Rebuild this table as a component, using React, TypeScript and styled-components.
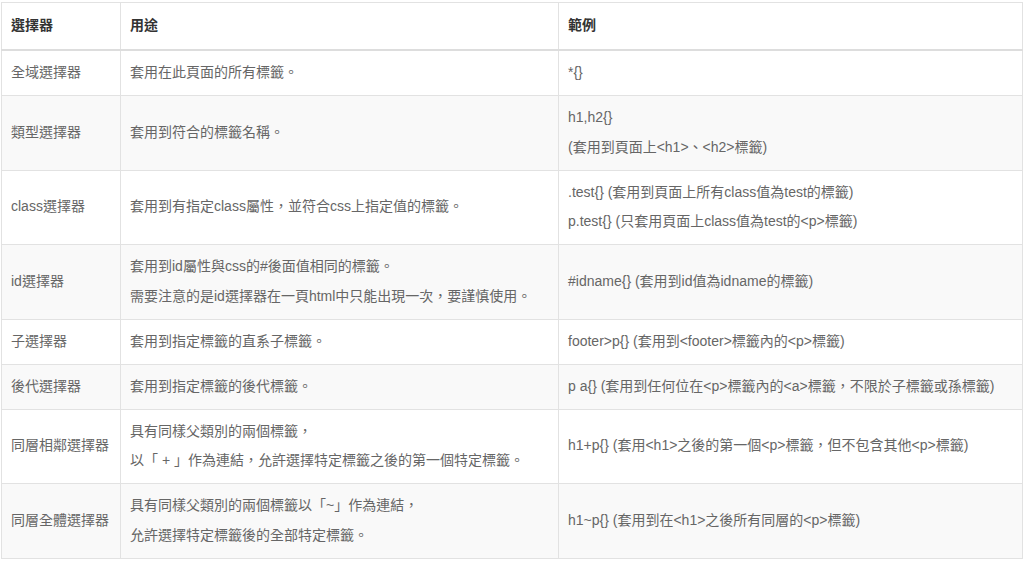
import React from "react";
import styled, { createGlobalStyle } from "styled-components";

const GlobalStyle = createGlobalStyle`
  html, body {
    margin: 0;
    padding: 0;
    background: #ffffff;
  }
  body {
    font-family: "Liberation Sans", Arial, "Noto Sans CJK TC", sans-serif;
  }
`;

const Page = styled.div`
  padding: 2px 1px 0 1px;
  width: 1022px;
`;

const Table = styled.table`
  width: 1022px;
  table-layout: fixed;
  border-collapse: collapse;
  border: 1px solid #dddddd;
  font-size: 14px;
  color: #666666;
`;

const HeadCell = styled.th`
  text-align: left;
  font-weight: bold;
  color: #333333;
  line-height: 29.5px;
  padding: 8px 9px 8.5px 9px;
  border: 1px solid #e2e2e2;
  border-bottom: 2px solid #dddddd;
  background: #ffffff;
`;

const Row = styled.tr<{ $striped: boolean }>`
  background: ${(p) => (p.$striped ? "#f9f9f9" : "#ffffff")};
`;

const Cell = styled.td`
  line-height: 29.5px;
  padding: 7px 9px 7.5px 9px;
  border: 1px solid #e2e2e2;
  vertical-align: middle;
  white-space: nowrap;
`;

const Line = styled.span`
  display: block;
`;

type RowData = { name: string; usage: string[]; example: string[] };

const rows: RowData[] = [
  { name: "全域選擇器", usage: ["套用在此頁面的所有標籤。"], example: ["*{}"] },
  {
    name: "類型選擇器",
    usage: ["套用到符合的標籤名稱。"],
    example: ["h1,h2{}", "(套用到頁面上<h1>、<h2>標籤)"],
  },
  {
    name: "class選擇器",
    usage: ["套用到有指定class屬性，並符合css上指定值的標籤。"],
    example: [".test{} (套用到頁面上所有class值為test的標籤)", "p.test{} (只套用頁面上class值為test的<p>標籤)"],
  },
  {
    name: "id選擇器",
    usage: ["套用到id屬性與css的#後面值相同的標籤。", "需要注意的是id選擇器在一頁html中只能出現一次，要謹慎使用。"],
    example: ["#idname{} (套用到id值為idname的標籤)"],
  },
  {
    name: "子選擇器",
    usage: ["套用到指定標籤的直系子標籤。"],
    example: ["footer>p{} (套用到<footer>標籤內的<p>標籤)"],
  },
  {
    name: "後代選擇器",
    usage: ["套用到指定標籤的後代標籤。"],
    example: ["p a{} (套用到任何位在<p>標籤內的<a>標籤，不限於子標籤或孫標籤)"],
  },
  {
    name: "同層相鄰選擇器",
    usage: ["具有同樣父類別的兩個標籤，", "以「 + 」作為連結，允許選擇特定標籤之後的第一個特定標籤。"],
    example: ["h1+p{} (套用<h1>之後的第一個<p>標籤，但不包含其他<p>標籤)"],
  },
  {
    name: "同層全體選擇器",
    usage: ["具有同樣父類別的兩個標籤以「~」作為連結，", "允許選擇特定標籤後的全部特定標籤。"],
    example: ["h1~p{} (套用到在<h1>之後所有同層的<p>標籤)"],
  },
];

const Lines = ({ items }: { items: string[] }) => (
  <>
    {items.map((t, i) => (
      <Line key={i}>{t}</Line>
    ))}
  </>
);

export default function App() {
  return (
    <Page>
      <GlobalStyle />
      <Table>
        <colgroup>
          <col style={{ width: 119 }} />
          <col style={{ width: 438 }} />
          <col />
        </colgroup>
        <thead>
          <tr>
            <HeadCell>選擇器</HeadCell>
            <HeadCell>用途</HeadCell>
            <HeadCell>範例</HeadCell>
          </tr>
        </thead>
        <tbody>
          {rows.map((r, i) => (
            <Row key={r.name} $striped={i % 2 === 1}>
              <Cell>{r.name}</Cell>
              <Cell>
                <Lines items={r.usage} />
              </Cell>
              <Cell>
                <Lines items={r.example} />
              </Cell>
            </Row>
          ))}
        </tbody>
      </Table>
    </Page>
  );
}
